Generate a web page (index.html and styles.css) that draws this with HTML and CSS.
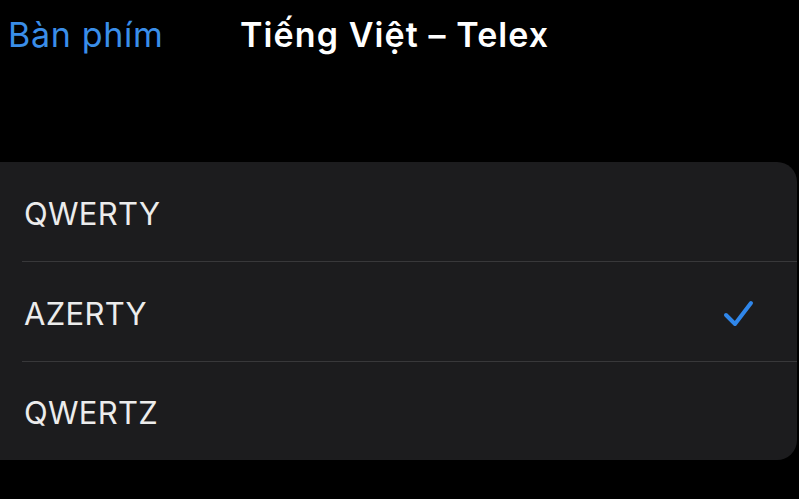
FILE: index.html
```html
<!DOCTYPE html>
<html lang="vi">
<head>
<meta charset="utf-8">
<link rel="stylesheet" href="styles.css">
</head>
<body>
<div class="screen">
  <header class="nav">
    <span class="back">Bàn phím</span>
    <span class="title">Tiếng Việt – Telex</span>
  </header>
  <section class="list">
    <div class="row"><span class="label">QWERTY</span></div>
    <div class="row"><span class="label">AZERTY</span>
      <svg class="check" width="34" height="30" viewBox="0 0 34 30"><path d="M4 17 L13 26 L29 5" fill="none" stroke="#2f86ea" stroke-width="4" stroke-linecap="round" stroke-linejoin="round"/></svg>
    </div>
    <div class="row"><span class="label">QWERTZ</span></div>
  </section>
</div>
</body>
</html>
```
FILE: styles.css
```css
html, body {
  margin: 0;
  padding: 0;
  background: #000;
}
.screen {
  width: 799px;
  height: 499px;
  overflow: hidden;
  font-family: Inter, "Noto Sans", sans-serif;
}
.nav {
  display: flex;
  align-items: baseline;
  height: 162px;
  box-sizing: border-box;
  padding: 14px 0 0 8px;
}
.back {
  color: #3a8ee9;
  font-size: 34px;
  letter-spacing: 0.7px;
  width: 232px;
}
.title {
  color: #fff;
  font-size: 34px;
  font-weight: 600;
  letter-spacing: 1.1px;
}
.list {
  background: #1c1c1e;
  border-radius: 0 20px 20px 0;
  width: 797px;
  height: 298px;
}
.row {
  display: flex;
  align-items: center;
  justify-content: space-between;
  height: 100px;
  margin-left: 22px;
  padding: 3px 41px 0 2px;
  box-sizing: border-box;
  border-bottom: 1.5px solid #38383a;
}
.row:last-child {
  height: 98px;
  border-bottom: none;
}
.label {
  color: #ececec;
  font-size: 31px;
  letter-spacing: 0.3px;
}
.check {
  display: block;
}
```
